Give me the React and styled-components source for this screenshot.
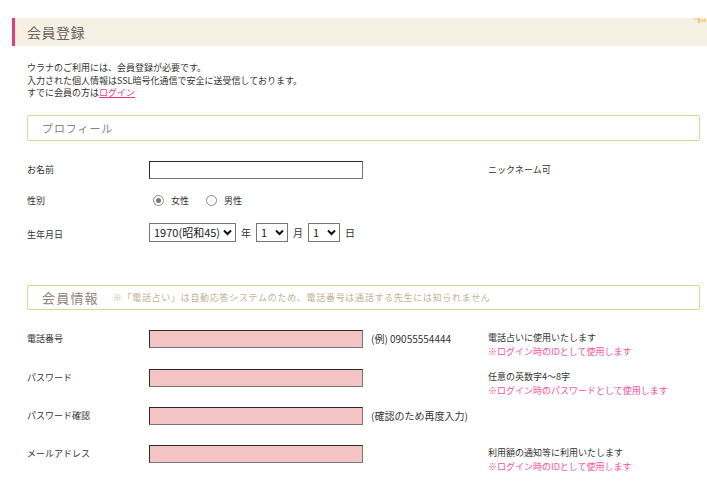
import React from 'react';
import styled, { createGlobalStyle } from 'styled-components';

const GlobalStyle = createGlobalStyle`
  html, body { margin: 0; padding: 0; background: #fff; }
  body {
    font-family: "Noto Sans CJK JP", "Noto Sans", sans-serif;
    color: #333;
    -webkit-font-smoothing: antialiased;
  }
  * { box-sizing: border-box; }
`;

const Page = styled.div`
  width: 707px;
  padding-top: 18px;
`;

const PageHeader = styled.div`
  position: relative;
  margin-left: 12px;
  height: 28px;
  background: #f6f1e4;
  border-left: 3px solid #ec3a78;
  display: flex;
  align-items: center;
  padding-left: 12px;
`;

const Title = styled.h1`
  margin: 0;
  font-size: 14px;
  font-weight: 400;
  color: #6b6560;
  letter-spacing: 0.5px;
`;

const Ornament = styled.svg`
  position: absolute;
  right: 0;
  top: 0;
`;

const Content = styled.div`
  padding: 0 7px 0 27px;
`;

const Intro = styled.p`
  margin: 16px 0 0;
  font-size: 9px;
  line-height: 12.5px;
  color: #333;
`;

const LoginLink = styled.a`
  color: #f0308a;
  text-decoration: underline;
`;

const SectionBox = styled.div`
  margin-top: ${p => p.$mt}px;
  height: ${p => p.$h}px;
  border: 1px solid #e3d38f;
  border-radius: 2px;
  display: flex;
  align-items: center;
  padding-left: 14px;
  gap: 14px;
`;

const SectionTitle = styled.span`
  font-size: ${p => p.$size}px;
  letter-spacing: ${p => p.$ls}px;
  color: #8e847c;
  white-space: nowrap;
`;

const SectionNote = styled.span`
  font-size: 9px;
  letter-spacing: 0.7px;
  color: #c2b294;
  white-space: nowrap;
`;

const Row = styled.div`
  display: grid;
  grid-template-columns: 122px 214px 125px 1fr;
  grid-template-rows: ${p => p.$h}px;
  align-items: ${p => p.$align || 'start'};
  margin-top: ${p => p.$mt || 0}px;
  height: ${p => p.$h}px;
`;

const Label = styled.div`
  font-size: 9px;
  height: 18px;
  line-height: ${p => p.$lh || 18}px;
  white-space: nowrap;
`;

const TextInput = styled.input`
  width: 214px;
  height: 18px;
  margin: 0;
  padding: 0 4px;
  border: 1px solid;
  border-color: #2b2b2b #767676 #767676 #2b2b2b;
  background: ${p => (p.$required ? '#f4c3c3' : '#fff')};
  font-family: inherit;
  font-size: 10px;
  outline: none;
`;

const Extra = styled.div`
  font-size: 10px;
  line-height: 18px;
  padding-left: 8px;
  white-space: nowrap;
`;

const Notes = styled.div`
  font-size: 9px;
  line-height: 14px;
  padding-top: 1px;
  white-space: nowrap;
`;

const PinkNote = styled.div`
  color: #ff4d9a;
`;

const Controls = styled.div`
  grid-column: 2 / 5;
  display: flex;
  align-items: center;
  gap: ${p => p.$gap || 0}px;
  height: 100%;
`;

const RadioItem = styled.label`
  display: flex;
  align-items: center;
  gap: 7px;
  font-size: 9px;
  margin-left: 4px;
  margin-right: 13px;
`;

const RadioCircle = styled.span`
  width: 11px;
  height: 11px;
  border-radius: 50%;
  border: 1px solid #8a8a8a;
  background: #fff;
  display: flex;
  align-items: center;
  justify-content: center;
  &::after {
    content: '';
    width: 5px;
    height: 5px;
    border-radius: 50%;
    background: ${p => (p.$checked ? '#7a7a7a' : 'transparent')};
  }
`;

const SelectWrap = styled.span`
  position: relative;
  display: block;
  width: ${p => p.$w}px;
  height: 19px;
`;

const Select = styled.select`
  display: block;
  appearance: none;
  -webkit-appearance: none;
  width: 100%;
  height: 100%;
  margin: 0;
  border: 1px solid #767676;
  border-radius: 0;
  background: #fff;
  padding: 0 0 0 4px;
  font-family: "Noto Sans CJK JP", sans-serif;
  font-size: 11px;
  color: #222;
  outline: none;
`;

const Chevron = styled.svg`
  position: absolute;
  right: 4px;
  top: 6px;
  pointer-events: none;
`;

const Unit = styled.span`
  font-size: 10px;
  margin: 0 1px;
`;

function DateSelect({ w, value }) {
  return (
    <SelectWrap $w={w}>
      <Select defaultValue={value}>
        <option value={value}>{value}</option>
      </Select>
      <Chevron width="9" height="7" viewBox="0 0 9 7">
        <path d="M1 1.5 L4.5 5 L8 1.5" stroke="#111" strokeWidth="2" fill="none" />
      </Chevron>
    </SelectWrap>
  );
}

export default function App() {
  return (
    <Page>
      <GlobalStyle />
      <PageHeader>
        <Title>会員登録</Title>
        <Ornament width="14" height="8" viewBox="0 0 14 8">
          <path d="M1 1 H8" stroke="#f2c94c" strokeWidth="1" />
          <path d="M6 1 V5 M9 1.5 L10 4 M12 1 V4" stroke="#f0c040" strokeWidth="1.5" />
        </Ornament>
      </PageHeader>
      <Content>
        <Intro>
          ウラナのご利用には、会員登録が必要です。<br />
          入力された個人情報はSSL暗号化通信で安全に送受信しております。<br />
          すでに会員の方は<LoginLink href="#">ログイン</LoginLink>
        </Intro>

        <SectionBox $mt={15} $h={26}>
          <SectionTitle $size={11} $ls={0.9}>プロフィール</SectionTitle>
        </SectionBox>

        <Row $mt={20} $h={18} $align="center">
          <Label>お名前</Label>
          <TextInput type="text" />
          <span />
          <Notes>ニックネーム可</Notes>
        </Row>

        <Row $mt={13} $h={18} $align="center">
          <Label>性別</Label>
          <Controls>
            <RadioItem>
              <RadioCircle $checked />
              女性
            </RadioItem>
            <RadioItem>
              <RadioCircle />
              男性
            </RadioItem>
          </Controls>
        </Row>

        <Row $mt={13} $h={19} $align="center">
          <Label $lh={24}>生年月日</Label>
          <Controls $gap={4}>
            <DateSelect w={87} value="1970(昭和45)" />
            <Unit>年</Unit>
            <DateSelect w={32} value="1" />
            <Unit>月</Unit>
            <DateSelect w={32} value="1" />
            <Unit>日</Unit>
          </Controls>
        </Row>

        <SectionBox $mt={43} $h={25}>
          <SectionTitle $size={13} $ls={1.2}>会員情報</SectionTitle>
          <SectionNote>※「電話占い」は自動応答システムのため、電話番号は通話する先生には知られません</SectionNote>
        </SectionBox>

        <Row $mt={20} $h={39}>
          <Label>電話番号</Label>
          <TextInput type="text" $required />
          <Extra>(例) 09055554444</Extra>
          <Notes>
            電話占いに使用いたします
            <PinkNote>※ログイン時のIDとして使用します</PinkNote>
          </Notes>
        </Row>

        <Row $h={38}>
          <Label>パスワード</Label>
          <TextInput type="password" $required />
          <span />
          <Notes>
            任意の英数字4～8字
            <PinkNote>※ログイン時のパスワードとして使用します</PinkNote>
          </Notes>
        </Row>

        <Row $h={38}>
          <Label>パスワード確認</Label>
          <TextInput type="password" $required />
          <Extra>(確認のため再度入力)</Extra>
          <span />
        </Row>

        <Row $h={40}>
          <Label>メールアドレス</Label>
          <TextInput type="email" $required />
          <span />
          <Notes>
            利用額の通知等に利用いたします
            <PinkNote>※ログイン時のIDとして使用します</PinkNote>
          </Notes>
        </Row>
      </Content>
    </Page>
  );
}
